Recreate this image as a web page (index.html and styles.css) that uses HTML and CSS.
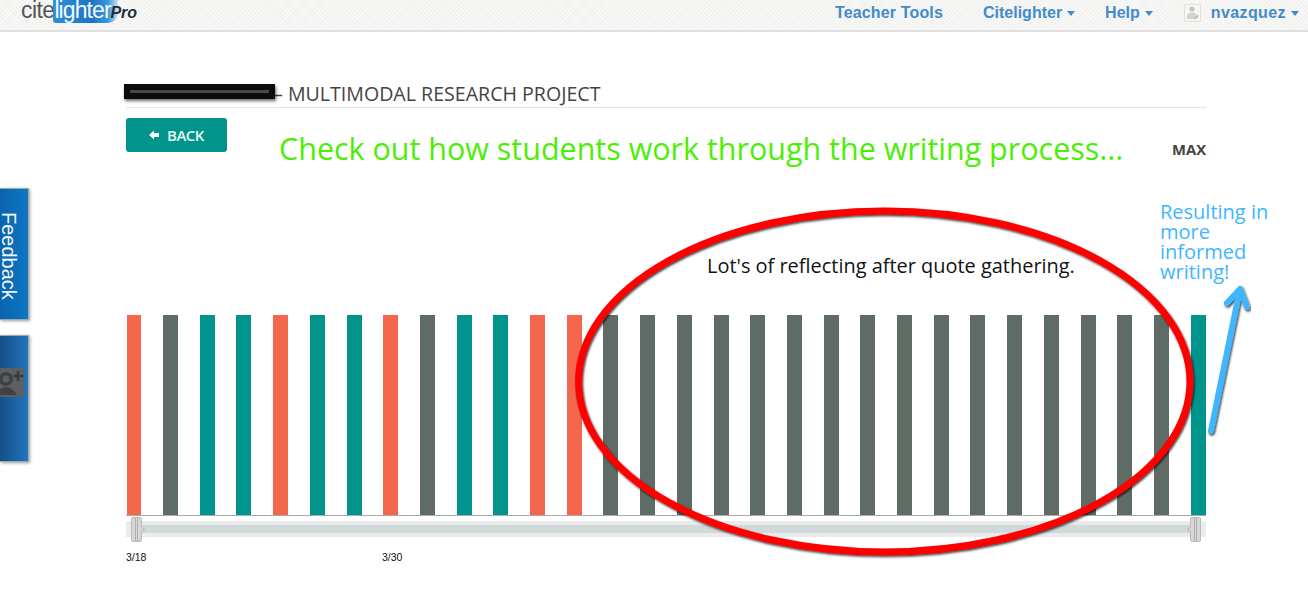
FILE: index.html
```
<!DOCTYPE html>
<html lang="en">
<head>
<meta charset="utf-8">
<title>Citelighter Pro</title>
<link rel="stylesheet" href="styles.css">
</head>
<body>
<header class="topbar">
  <div class="logo"><span class="logo-cite">cite</span><span class="logo-lighter">lighter</span><span class="logo-pro">Pro</span></div>
  <nav class="nav">
    <a class="nav-item nav-tools">Teacher Tools</a>
    <a class="nav-item nav-cite">Citelighter<i class="caret"></i></a>
    <a class="nav-item nav-help">Help<i class="caret"></i></a>
    <a class="nav-item nav-user">
      <svg class="avatar" viewBox="0 0 17 18"><rect x="0.5" y="0.5" width="16" height="17" fill="#f6f6f4" stroke="#e2e2e2"/><circle cx="8" cy="5" r="2.6" fill="#c4c4c0"/><path d="M3 15v-3.500q1-3 5-3t5 3V15z" fill="#d2d2ce"/><path d="M10 14l4-3 1 1-4 3z" fill="#b5b5b0"/></svg>
      nvazquez<i class="caret"></i>
    </a>
  </nav>
</header>

<main class="page">
  <h1 class="title"><span class="title-text">– MULTIMODAL RESEARCH PROJECT</span><span class="redact"><span class="redact-line"></span></span></h1>
  <div class="toolbar">
    <a class="back"><svg class="back-icon" viewBox="0 0 10 10"><path d="M0 5l5-4.500V3h5v4H5v2.500z" fill="#fff"/></svg>BACK</a>
    <span class="max">MAX</span>
  </div>
  <div class="bars">
    <div class="bar o first"></div><div class="bar g"></div><div class="bar t"></div><div class="bar t"></div><div class="bar o"></div><div class="bar t"></div><div class="bar t"></div><div class="bar o"></div><div class="bar g"></div><div class="bar t"></div><div class="bar t"></div><div class="bar o"></div><div class="bar o"></div><div class="bar g"></div><div class="bar g"></div><div class="bar g"></div><div class="bar g"></div><div class="bar g"></div><div class="bar g"></div><div class="bar g"></div><div class="bar g"></div><div class="bar g"></div><div class="bar g"></div><div class="bar g"></div><div class="bar g"></div><div class="bar g"></div><div class="bar g"></div><div class="bar g"></div><div class="bar g"></div><div class="bar t"></div>
  </div>
  <div class="slider">
    <div class="slider-fill"></div>
    <div class="handle handle-l"></div>
    <div class="handle handle-r"></div>
  </div>
  <div class="dates"><span class="date-a">3/18</span><span>3/30</span></div>
</main>

<div class="tab tab-feedback">Feedback</div>
<div class="tab tab-gplus">
  <svg class="gplus" viewBox="0 0 25 30"><rect x="-4" y="0" width="28" height="29" rx="3" fill="#5d5f63"/><circle cx="6" cy="11" r="7" fill="#3f4044"/><circle cx="6" cy="11" r="3.500" fill="#5d5f63"/><path d="M-4 27q4-8 10-8t11 8z" fill="#3f4044"/><path d="M18 3v10M13.500 8h10" stroke="#38393d" stroke-width="2.500"/></svg>
</div>

<p class="note note-green">Check out how students work through the writing process...</p>
<p class="note note-black">Lot's of reflecting after quote gathering.</p>
<p class="note note-blue">Resulting in<br>more<br>informed<br>writing!</p>

<svg class="marks" viewBox="0 0 1308 602">
  <defs>
    <filter id="shadow" x="-10%" y="-10%" width="120%" height="120%">
      <feDropShadow dx="1" dy="1.500" stdDeviation="1.200" flood-color="#000" flood-opacity="0.800"/>
    </filter>
  </defs>
  <ellipse cx="884.300" cy="381.500" rx="305.700" ry="170.500" fill="none" stroke="#ff0000" stroke-width="7" filter="url(#shadow)"/>
  <path d="M1211 431L1240 289M1227 303L1240 289L1247 307" fill="none" stroke="#3fb6ff" stroke-width="6" stroke-linecap="round" stroke-linejoin="round" filter="url(#shadow)"/>
</svg>
</body>
</html>
```
FILE: styles.css
```
html, body {
  margin: 0;
  padding: 0;
}
body {
  position: relative;
  height: 602px;
  overflow: hidden;
  background: #fff;
  font-family: "Liberation Sans", Arial, sans-serif;
}
.topbar {
  height: 30px;
  display: flex;
  justify-content: space-between;
  background-color: #f8f8f7;
  background-image: repeating-linear-gradient(45deg, rgba(0,0,0,0.018) 0 1px, transparent 1px 3px), repeating-linear-gradient(-45deg, rgba(0,0,0,0.018) 0 1px, transparent 1px 3px);
  border-bottom: 2px solid #dfdfdf;
}
.logo {
  display: flex;
  align-items: flex-start;
  height: 30px;
  overflow: hidden;
  padding-left: 21px;
  font-size: 23px;
  line-height: 20px;
  letter-spacing: -0.6px;
}
.logo-cite {
  color: #555;
}
.logo-lighter {
  width: 65px;
  height: 23px;
  margin-right: -8px;
  margin-left: -1px;
  padding-left: 1px;
  box-sizing: border-box;
  color: #f2f8fd;
  letter-spacing: -0.9px;
  background: linear-gradient(90deg, #2f8fd6, #1f74c0 60%, #3a9ade 85%, rgba(58,154,222,0.2));
  border-radius: 0 0 10px 3px;
}
.logo-pro {
  position: relative;
  top: 3px;
  color: #1f2c3a;
  font-size: 16px;
  line-height: 20px;
  font-weight: bold;
  font-style: italic;
  letter-spacing: 0;
}
.nav {
  display: flex;
  align-items: center;
  height: 25px;
  padding-right: 9px;
  font-size: 16px;
  font-weight: bold;
  color: #428bca;
}
.nav-item {
  display: flex;
  align-items: center;
  white-space: nowrap;
}
.nav-tools { margin-right: 40px; letter-spacing: 0.15px; }
.nav-cite { margin-right: 30px; }
.nav-help { margin-right: 31px; }
.nav-user { letter-spacing: 0.4px; }
.caret {
  width: 0;
  height: 0;
  margin-left: 5px;
  margin-top: 2px;
  border-left: 4.500px solid transparent;
  border-right: 4.500px solid transparent;
  border-top: 5px solid #428bca;
}
.avatar {
  width: 17px;
  height: 18px;
  margin-right: 10px;
}
.page {
  width: 1080px;
  margin-left: 126px;
}
.title {
  position: relative;
  height: 75px;
  margin: 0;
  display: flex;
  align-items: flex-start;
  border-bottom: 1px solid #e6e6e6;
  font-family: "Open Sans", sans-serif;
  font-size: 19.600px;
  font-weight: normal;
  color: #444;
}
.title-text {
  line-height: 24px;
  margin: 50px 0 0 147px;
  white-space: nowrap;
}
.redact {
  position: absolute;
  left: -2px;
  top: 52px;
  width: 151px;
  height: 15px;
  display: flex;
  align-items: center;
  background: #0c0c0c;
  box-shadow: 1px 2px 3px rgba(0,0,0,0.6);
}
.redact-line {
  display: block;
  width: 139px;
  height: 3px;
  margin-left: 6px;
  background: #484848;
}
.toolbar {
  height: 197px;
  padding-top: 10px;
  display: flex;
  justify-content: space-between;
  align-items: flex-start;
}
.back {
  width: 101px;
  height: 34px;
  display: flex;
  align-items: center;
  justify-content: center;
  gap: 8px;
  background: #00948a;
  border-radius: 3px;
  color: #eafaf8;
  font-family: "Open Sans", sans-serif;
  font-size: 15px;
  font-weight: 600;
  letter-spacing: -0.5px;
}
.back-icon {
  width: 10px;
  height: 10px;
}
.max {
  margin-top: 22px;
  font-family: "Open Sans", sans-serif;
  font-size: 14.800px;
  font-weight: 700;
  line-height: 19px;
  color: #444;
}
.bars {
  height: 200px;
  padding-left: 1px;
  display: flex;
  gap: 21.710px;
  border-bottom: 1px solid #aaa;
}
.bar {
  width: 15px;
  flex: none;
}
.bar.first { width: 14.290px; }
.o { background: #f4674c; }
.g { background: #5f6c65; }
.t { background: #00948c; }
.slider {
  position: relative;
  height: 16px;
  margin-top: 5px;
  display: flex;
  align-items: center;
  background: #ebebeb;
}
.slider-fill {
  width: 100%;
  height: 8px;
  margin-left: 10px;
  margin-right: 8px;
  background: #d0dada;
}
.handle {
  position: absolute;
  top: -4px;
  width: 9px;
  height: 23px;
  border: 1px solid #bbb;
  border-radius: 2px;
  background: linear-gradient(90deg, #d6d6d6 0 3px, #b0b0b0 3px 4px, #d6d6d6 4px 5px, #b0b0b0 5px 6px, #d6d6d6 6px);
}
.handle::after {
  content: "";
  position: absolute;
  top: 9px;
  width: 4px;
  height: 4px;
  background: #d6d6d6;
  border: solid #bbb;
  border-width: 1px 1px 0 0;
  transform: rotate(45deg);
}
.handle-l { left: 5px; }
.handle-l::after { right: -3px; }
.handle-r { right: 5px; }
.handle-r::after { left: -3px; transform: rotate(225deg); }
.dates {
  margin-top: 14px;
  display: flex;
  font-size: 10.500px;
  line-height: 12px;
  color: #111;
}
.date-a { width: 256px; }
.tab {
  position: absolute;
  left: 0;
  width: 29px;
  box-sizing: border-box;
  box-shadow: 1px 1px 3px rgba(0,0,0,0.4);
  border: solid #9aa;
  border-width: 1px 1px 1px 0;
}
.tab-feedback {
  top: 188px;
  height: 132px;
  overflow: hidden;
  padding-right: 9px;
  background: linear-gradient(90deg, #0a64ad, #0e76c4);
  color: #f2f6fa;
  writing-mode: vertical-rl;
  font-size: 20px;
  line-height: 20px;
  text-align: left;
  text-indent: 23px;
}
.tab-gplus {
  top: 335px;
  height: 127px;
  background: linear-gradient(90deg, #144f86, #2274bd);
}
.gplus {
  display: block;
  width: 25px;
  height: 30px;
  margin-top: 32px;
}
.note {
  position: absolute;
  margin: 0;
  font-family: "Open Sans", sans-serif;
  white-space: nowrap;
}
.note-green {
  left: 279px;
  top: 127px;
  font-size: 30.470px;
  line-height: 42px;
  color: #4cee05;
}
.note-black {
  left: 707px;
  top: 253px;
  font-size: 19.950px;
  line-height: 26px;
  color: #111;
}
.note-blue {
  left: 1160px;
  top: 202px;
  font-size: 20px;
  line-height: 20px;
  color: #3fb6ff;
}
.marks {
  position: absolute;
  left: 0;
  top: 0;
  width: 1308px;
  height: 602px;
  pointer-events: none;
}
```
